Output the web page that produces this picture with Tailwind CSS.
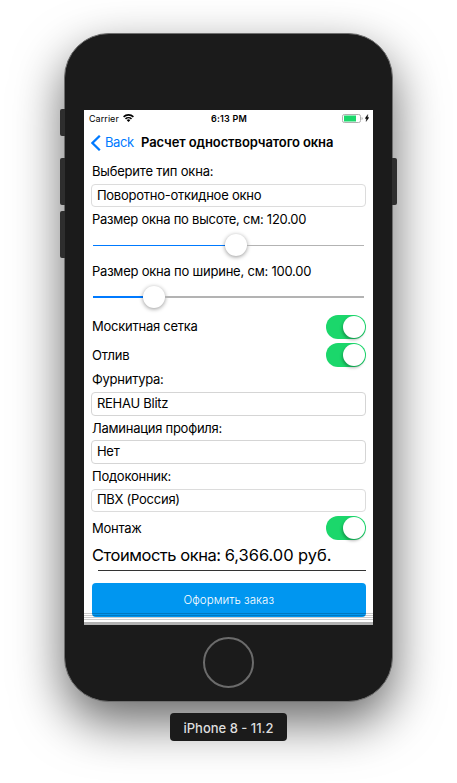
<!DOCTYPE html>
<html lang="ru">
<head>
<meta charset="utf-8">
<title>iPhone 8 - 11.2</title>
<script src="https://cdn.jsdelivr.net/npm/@tailwindcss/browser@4"></script>
</head>
<body class="bg-white">
<div class="relative w-[457px] h-[783px] overflow-hidden bg-white font-['Inter','Noto_Sans',sans-serif] text-[13px] text-black whitespace-nowrap flex flex-col items-center pt-[33px]">
  <div class="w-[329px] h-[669px] rounded-[45px] bg-[#1b1b1b] border border-[#6f6f6f] shadow-[0_20px_50px_rgba(0,0,0,0.6)] flex flex-col items-center pt-[76px]">
    <main class="relative w-[289px] h-[515px] bg-white flex flex-col overflow-hidden">
      <header class="grid grid-cols-3 items-center h-4 pl-[5px] pr-[4px] text-[9px] leading-none">
        <div class="flex items-center gap-[4px]">
          <span class="tracking-[0.05px]">Carrier</span>
          <svg class="w-[11px] h-[8px]" viewBox="0 0 11 8" fill="none" stroke="#000" stroke-width="1.6"><path d="M.6 2.9a7 7 0 0 1 9.8 0M2.5 4.9a4.3 4.3 0 0 1 6 0"/><path d="M5.5 8 3.8 6.2a2.4 2.4 0 0 1 3.4 0z" fill="#000" stroke="none"/></svg>
        </div>
        <span class="text-center font-semibold tracking-[0.2px]">6:13 PM</span>
        <div class="flex items-center justify-end gap-[2px]">
          <svg class="w-[21px] h-[9px]" viewBox="0 0 21 9"><rect x=".5" y=".5" width="18" height="8" rx="1.8" fill="#fff" stroke="#b0b0b0"/><rect x="2" y="1.500" width="12" height="6" fill="#1bd76b"/><path d="M19.6 3v3q1-.4 1-1.500t-1-1.500" fill="#aaa"/></svg>
          <svg class="w-[4px] h-[8px]" viewBox="0 0 4 8"><path d="M2.800 0.500 0 4.500h1.500L1.100 7.500 4 3.400H2.500z" stroke="#000" stroke-width=".3"/></svg>
        </div>
      </header>
      <nav class="flex items-center h-[34px] pl-[7px] pb-px leading-none">
        <svg class="w-[10px] h-[16px]" viewBox="0 0 10 16" fill="none" stroke="#007aff" stroke-width="2.3"><path d="M8.800.800 1.400 8l7.400 7.200"/></svg>
        <span class="ml-[4px] w-[36px] text-[#007aff] tracking-[-0.4px]">Back</span>
        <h1 class="font-semibold tracking-[-0.11px]">Расчет одностворчатого окна</h1>
      </nav>
      <section class="flex flex-col pl-[8px] pr-[7.5px] leading-none tracking-[-0.25px]">
        <div class="h-[24px] flex items-center pb-px"><span class="tracking-[-0.2px]">Выберите тип окна:</span></div>
        <div class="h-[23px] flex items-center pl-[4.500px] pb-px -ml-[0.6px] border border-[#dcdcdc] rounded-[4px]"><span>Поворотно-откидное окно</span></div>
        <div class="h-[26px] flex items-center pb-px"><span>Размер окна по высоте, см: 120.00</span></div>
        <div class="h-[24px] flex items-center pl-px pr-[1.500px]">
          <div class="w-[132px] h-px bg-[#007aff]"></div>
          <div class="size-[22px] rounded-full bg-white shadow-[0_1px_4px_rgba(0,0,0,0.42)]"></div>
          <div class="flex-1 h-px bg-[#b3b3b3]"></div>
        </div>
        <div class="h-[28px] flex items-center"><span class="tracking-[-0.22px]">Размер окна по ширине, см: 100.00</span></div>
        <div class="h-[24px] flex items-center pl-px pr-[1.500px] pb-px">
          <div class="w-[50px] h-[2px] bg-[#007aff]"></div>
          <div class="size-[22px] rounded-full bg-white shadow-[0_1px_4px_rgba(0,0,0,0.42)]"></div>
          <div class="flex-1 h-[2px] bg-[#b3b3b3]"></div>
        </div>
        <div class="mt-[5px] h-[25px] flex items-center justify-between"><span>Москитная сетка</span>
          <div class="w-[40px] h-[24px] rounded-full bg-[#1bd76b] p-px flex justify-end"><div class="size-[22px] rounded-full bg-white shadow-[-1px_2px_3px_rgba(0,0,0,0.28)]"></div></div></div>
        <div class="mt-[4px] h-[24px] flex items-center justify-between"><span>Отлив</span>
          <div class="w-[40px] h-[24px] rounded-full bg-[#1bd76b] p-px flex justify-end"><div class="size-[22px] rounded-full bg-white shadow-[-1px_2px_3px_rgba(0,0,0,0.28)]"></div></div></div>
        <div class="h-[25px] flex items-center"><span>Фурнитура:</span></div>
        <div class="h-[24px] flex items-center pl-[4.500px] pb-[2px] -ml-[0.6px] border border-[#d5d5d5] rounded-[4px]"><span>REHAU Blitz</span></div>
        <div class="h-[24px] flex items-center"><span>Ламинация профиля:</span></div>
        <div class="h-[24px] flex items-center pl-[4.500px] pb-[2px] -ml-[0.6px] border border-[#d5d5d5] rounded-[4px]"><span>Нет</span></div>
        <div class="h-[25px] flex items-center"><span>Подоконник:</span></div>
        <div class="h-[23px] flex items-center pl-[4.500px] pb-[2px] -ml-[0.6px] border border-[#dcdcdc] rounded-[4px]"><span>ПВХ (Россия)</span></div>
        <div class="mt-[4px] h-[24px] flex items-center justify-between"><span>Монтаж</span>
          <div class="w-[40px] h-[24px] rounded-full bg-[#1bd76b] p-px flex justify-end"><div class="size-[22px] rounded-full bg-white shadow-[-1px_2px_3px_rgba(0,0,0,0.28)]"></div></div></div>
        <div class="h-[30px] flex items-center pt-px text-[16.5px] tracking-[-0.47px]"><span>Стоимость окна: <span class="tracking-[-0.05px]">6,366.00 руб.</span></span></div>
        <div class="ml-[6px] h-px bg-[#333]"></div>
        <button class="mt-[12px] h-[34px] pt-[2px] rounded-[4px] bg-[#0096f0] text-white text-[11.5px] tracking-[0.04px] font-light">Оформить заказ</button>
      </section>
      <!-- stacked page edges -->
      <div class="absolute inset-x-0 top-[503px] h-[7px] flex flex-col justify-between">
        <div class="h-px bg-black/20"></div><div class="h-px bg-black/20"></div><div class="h-px bg-black/20"></div><div class="h-px bg-black/20"></div>
      </div>
      <div class="absolute inset-x-0 bottom-0 h-[3px] bg-[#b2b2b2]"></div>
    </main>
    <div class="mt-[12px] size-[51px] rounded-full border-2 border-[#6b6b6b]"></div>
  </div>
  <!-- hardware buttons -->
  <div class="absolute left-[60px] top-[109px] w-[5px] h-[27px] rounded-l-[2px] bg-[#2e2e2e]"></div>
  <div class="absolute left-[60px] top-[158px] w-[5px] h-[47px] rounded-l-[2px] bg-[#2e2e2e]"></div>
  <div class="absolute left-[60px] top-[211px] w-[5px] h-[47px] rounded-l-[2px] bg-[#2e2e2e]"></div>
  <div class="absolute left-[392px] top-[158px] w-[5px] h-[47px] rounded-r-[2px] bg-[#2e2e2e]"></div>
  <div class="mt-[11px] w-[117px] h-[28px] pt-[2px] rounded-[4px] bg-[#1b1b1b] text-[#dedede] font-medium flex items-center justify-center leading-none"><span>iPhone 8 - 11.2</span></div>
</div>
</body>
</html>
